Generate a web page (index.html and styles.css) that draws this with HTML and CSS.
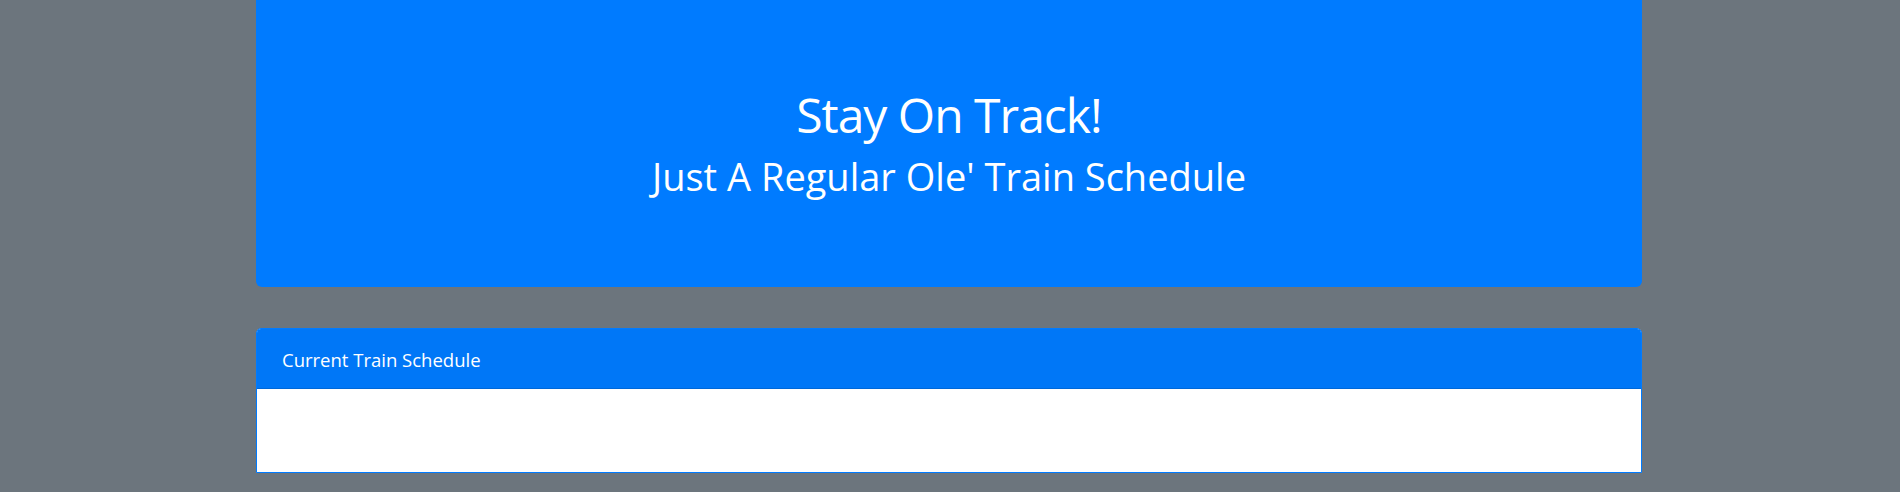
FILE: index.html
```html
<!DOCTYPE html>
<html lang="en">
<head>
<meta charset="utf-8">
<title>Train Schedule</title>
<link rel="stylesheet" href="styles.css">
</head>
<body>
<div class="container">
  <div class="jumbotron">
    <h1 class="title">Stay On Track!</h1>
    <h2 class="subtitle">Just A Regular Ole' Train Schedule</h2>
  </div>
  <div class="card">
    <div class="card-header">Current Train Schedule</div>
    <div class="card-body"></div>
  </div>
</div>
</body>
</html>
```

FILE: styles.css
```css
html, body {
  margin: 0;
  padding: 0;
}
body {
  background: #6c757d;
  font-family: "Open Sans", "Noto Sans", sans-serif;
  color: #fff;
  height: 492px;
  overflow: hidden;
}
.container {
  margin: 0 258px 0 256px;
}
.jumbotron {
  background: #007bff;
  border-radius: 0 0 6px 6px;
  height: 287px;
  box-sizing: border-box;
  padding-top: 82px;
  text-align: center;
  margin-bottom: 41px;
}
.title {
  margin: 0;
  font-weight: 400;
  font-size: 48px;
  letter-spacing: -1px;
  line-height: 66px;
}
.subtitle {
  margin: 0;
  font-weight: 400;
  font-size: 38px;
  line-height: 56px;
}
.card {
  border: 1px solid #007bff;
  border-radius: 5px 5px 0 0;
  background: #fff;
  overflow: hidden;
}
.card-header {
  background: #0077f7;
  height: 60px;
  box-sizing: border-box;
  padding: 16px 25px 0;
  font-size: 18.5px;
  line-height: 30px;
  border-bottom: 1px solid #0068d8;
}
.card-body {
  height: 83px;
}
```
